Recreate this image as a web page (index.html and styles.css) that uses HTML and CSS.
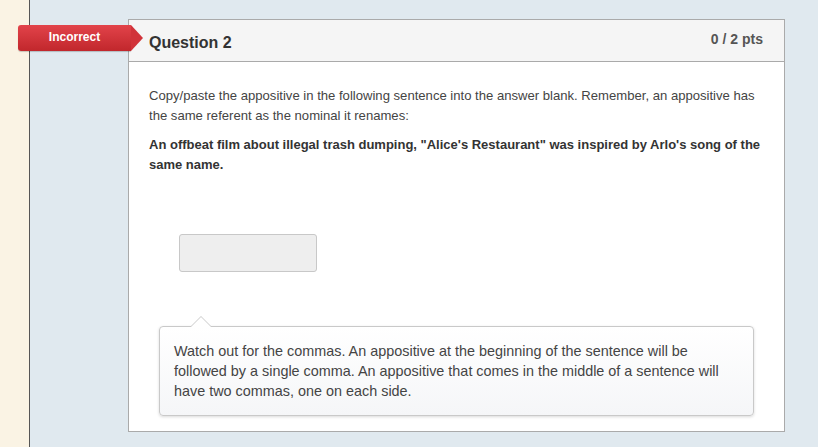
FILE: index.html
```html
<!DOCTYPE html>
<html>
<head>
<meta charset="utf-8">
<link rel="stylesheet" href="styles.css">
</head>
<body>
<div class="page">
  <div class="strip"></div>
  <div class="main">
    <div class="badge">Incorrect</div>
    <div class="card">
      <div class="card-head">
        <div class="q-title">Question 2</div>
        <div class="q-pts">0 / 2 pts</div>
      </div>
      <div class="card-body">
        <p class="prompt">Copy/paste the appositive in the following sentence into the answer blank. Remember, an appositive has the same referent as the nominal it renames:</p>
        <p class="sentence">An offbeat film about illegal trash dumping, "Alice's Restaurant" was inspired by Arlo's song of the same name.</p>
        <div class="answer"></div>
        <div class="tip">Watch out for the commas. An appositive at the beginning of the sentence will be followed by a single comma. An appositive that comes in the middle of a sentence will have two commas, one on each side.</div>
      </div>
    </div>
  </div>
</div>
</body>
</html>
```
FILE: styles.css
```css
html, body {
  margin: 0;
  padding: 0;
  height: 100%;
}
body {
  font-family: "Liberation Sans", Arial, sans-serif;
  background: #e0e9ef;
  color: #333;
}
.page {
  display: flex;
  min-height: 447px;
}
.strip {
  width: 29px;
  background: #faf3e4;
  border-right: 1px solid #555;
  flex: none;
}
.main {
  position: relative;
  flex: 1;
  padding: 19px 0 0 98px;
}
.badge {
  position: absolute;
  left: -12px;
  top: 25px;
  width: 113px;
  height: 26px;
  line-height: 25px;
  background: linear-gradient(#e2434a, #c1272c);
  border-radius: 3px 0 0 3px;
  color: #fff;
  font-size: 12px;
  font-weight: bold;
  text-align: center;
  box-shadow: 0 1px 1px rgba(0,0,0,0.2);
  z-index: 2;
}
.badge::after {
  content: "";
  position: absolute;
  right: -12px;
  top: 0;
  border-top: 13px solid transparent;
  border-bottom: 13px solid transparent;
  border-left: 12px solid #d1333a;
}
.card {
  width: 655px;
  border: 1px solid #aaa;
  background: #fff;
}
.card-head {
  display: flex;
  justify-content: space-between;
  align-items: flex-start;
  height: 41px;
  background: #f5f5f5;
  border-bottom: 1px solid #aaa;
  padding: 0 20px;
}
.q-title {
  font-size: 16px;
  font-weight: bold;
  color: #333;
  margin-top: 14px;
}
.q-pts {
  font-size: 14px;
  font-weight: bold;
  color: #555;
  margin-top: 11px;
  margin-right: 1px;
}
.card-body {
  padding: 24px 20px 15px 20px;
}
.prompt {
  margin: 0;
  font-size: 13.1px;
  line-height: 20px;
  color: #444;
}
.sentence {
  margin: 9px 0 0 0;
  font-size: 13px;
  line-height: 20px;
  font-weight: bold;
  color: #333;
}
.answer {
  margin: 59px 0 0 30px;
  width: 136px;
  height: 36px;
  background: #eee;
  border: 1px solid #c8c8c8;
  border-radius: 3px;
}
.tip {
  position: relative;
  margin: 54px 0 0 10px;
  width: 565px;
  padding: 14px;
  border: 1px solid #c9c9c9;
  border-radius: 4px;
  background: linear-gradient(#fff, #f5f6f8);
  box-shadow: 0 1px 3px rgba(0,0,0,0.15);
  font-size: 14.4px;
  line-height: 20px;
  color: #444;
}
.tip::before {
  content: "";
  position: absolute;
  left: 30px;
  top: -11px;
  border-left: 11px solid transparent;
  border-right: 11px solid transparent;
  border-bottom: 11px solid #c9c9c9;
}
.tip::after {
  content: "";
  position: absolute;
  left: 31px;
  top: -10px;
  border-left: 10px solid transparent;
  border-right: 10px solid transparent;
  border-bottom: 10px solid #fff;
}
```
